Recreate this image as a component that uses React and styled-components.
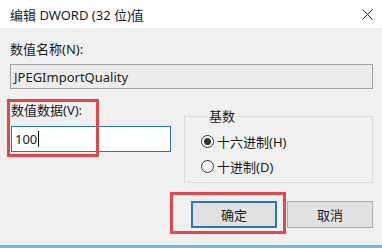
import React from 'react'
import styled, { createGlobalStyle } from 'styled-components'

const Colors = {
  FACE: '#f0f0f0',
  TEXT: '#1a1a1a',
  FOCUS: '#2b74b8',
  MARK: '#e0474c',
  GROUP: '#dcdcdc',
}

const GlobalStyle = createGlobalStyle`
  html, body {
    margin: 0;
    padding: 0;
    background: ${Colors.FACE};
  }
  body {
    font-family: "Noto Sans", "Noto Sans CJK SC", sans-serif;
    font-size: 13px;
    color: ${Colors.TEXT};
  }
`

const Window = styled.div`
  width: 382px;
  height: 248px;
  display: flex;
  flex-direction: column;
  background: ${Colors.FACE};
  border-bottom: 3px solid #7db4dc;
  box-sizing: border-box;
`

const TitleBar = styled.div`
  height: 28px;
  flex: none;
  display: flex;
  align-items: center;
  justify-content: space-between;
  padding: 0 9px 0 10px;
  background: #ffffff;
`

const Body = styled.div`
  display: flex;
  flex-direction: column;
  padding: 13px 9px 0 10px;
`

const Label = styled.div`
  line-height: 17px;
  height: 17px;
  white-space: nowrap;
`

const TextBox = styled.div`
  box-sizing: border-box;
  height: ${p => p.h}px;
  display: flex;
  align-items: center;
  padding-left: 3px;
  border: 1px solid ${p => (p.focused ? Colors.FOCUS : '#a0a0a0')};
  background: ${p => (p.focused ? '#ffffff' : '#ececec')};
  color: #222;
`

const Caret = styled.span`
  display: inline-block;
  width: 1px;
  height: 16px;
  background: #000;
  margin-left: 1px;
`

const Row = styled.div`
  display: flex;
  margin-top: 13px;
`

const LeftCol = styled.div`
  position: relative;
  width: 161px;
  display: flex;
  flex-direction: column;
  gap: 7px;
  padding-left: 1px;
`

const Marker = styled.div`
  position: absolute;
  box-sizing: border-box;
  border: 3px solid ${Colors.MARK};
  pointer-events: none;
`

const GroupBox = styled.fieldset`
  box-sizing: border-box;
  margin: 8px 0 0 13px;
  padding: 11px 0 0 16px;
  width: 190px;
  height: 73px;
  border: 1px solid ${Colors.GROUP};
  display: flex;
  flex-direction: column;
  gap: 8px;
`

const Legend = styled.legend`
  padding: 0 2px;
  margin-left: 6px;
  line-height: 12px;
`

const RadioRow = styled.div`
  display: flex;
  align-items: center;
  gap: 3px;
  height: 17px;
`

const RadioCircle = styled.span`
  box-sizing: border-box;
  width: 13px;
  height: 13px;
  border-radius: 50%;
  border: 1px solid #333;
  background: #fff;
  display: flex;
  align-items: center;
  justify-content: center;
  &::after {
    content: '';
    width: 7px;
    height: 7px;
    border-radius: 50%;
    background: ${p => (p.checked ? '#333' : 'transparent')};
  }
`

const ButtonRow = styled.div`
  position: relative;
  display: flex;
  justify-content: flex-end;
  gap: 10px;
  margin-top: 18px;
`

const Button = styled.div`
  box-sizing: border-box;
  width: 86px;
  height: 27px;
  display: flex;
  align-items: center;
  justify-content: center;
  background: #e1e1e1;
  border: ${p => (p.primary ? `2px solid ${Colors.FOCUS}` : '1px solid #adadad')};
`

const CloseIcon = () => (
  <svg width="11" height="11" viewBox="0 0 11 11">
    <path d="M0.5 0.5 L10.5 10.5 M10.5 0.5 L0.5 10.5" stroke="#222" strokeWidth="1" />
  </svg>
)

export default function App() {
  return (
    <Window>
      <GlobalStyle />
      <TitleBar>
        <span>编辑 DWORD (32 位)值</span>
        <CloseIcon />
      </TitleBar>
      <Body>
        <Label>数值名称(N):</Label>
        <TextBox h={25} style={{ marginTop: 6 }}>JPEGImportQuality</TextBox>
        <Row>
          <LeftCol>
            <Label>数值数据(V):</Label>
            <TextBox h={26} focused>
              100<Caret />
            </TextBox>
            <Marker style={{ left: -3, top: -3, width: 92, height: 58 }} />
          </LeftCol>
          <GroupBox>
            <Legend>基数</Legend>
            <RadioRow>
              <RadioCircle checked />
              <span>十六进制(H)</span>
            </RadioRow>
            <RadioRow>
              <RadioCircle />
              <span>十进制(D)</span>
            </RadioRow>
          </GroupBox>
        </Row>
        <ButtonRow>
          <Button primary>确定</Button>
          <Button>取消</Button>
          <Marker style={{ right: 87, top: -9, width: 116, height: 42 }} />
        </ButtonRow>
      </Body>
    </Window>
  )
}
